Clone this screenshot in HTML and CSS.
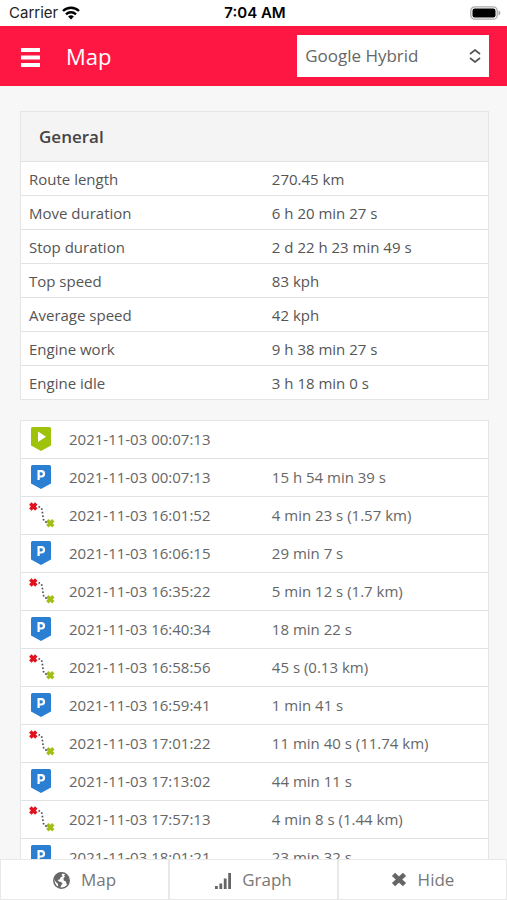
FILE: index.html
```html
<!DOCTYPE html>
<html lang="en">
<head>
<meta charset="utf-8">
<meta name="viewport" content="width=device-width, initial-scale=1">
<title>Map</title>
<link rel="stylesheet" href="styles.css">
</head>
<body>
<svg width="0" height="0" class="sprites" aria-hidden="true">
  <symbol id="start" viewBox="0 0 20 24">
    <path fill="#9fc20b" d="M1.500 0h17q1.500 0 1.500 1.500V18.500L10 24 0 18.500V1.500Q0 0 1.500 0z"/>
    <path fill="#fff" d="M7 4.500v10.500l8-5.250z"/>
  </symbol>
  <symbol id="park" viewBox="0 0 20 24">
    <path fill="#2b7fd3" d="M1.500 0h17q1.500 0 1.500 1.500V18.500L10 24 0 18.500V1.500Q0 0 1.500 0z"/>
    <path fill="none" stroke="#fff" stroke-width="2.200" d="M7.600 15V6.100h2.700a2.700 2.700 0 0 1 0 5.400H7.600"/>
  </symbol>
  <symbol id="drive" viewBox="0 0 26 26">
    <path stroke="#e3111b" stroke-width="3.400" d="M1.300 1.500l6 6M7.300 1.500l-6 6"/>
    <path stroke="#a1bf17" stroke-width="3.400" d="M18.300 18.300l6 6M24.300 18.300l-6 6"/>
    <path fill="none" stroke="#555" stroke-width="1.700" stroke-dasharray="1.700 1.900" d="M9.500 4.500l3 1.500 1 5 .5 4.500 1 3.500 3 1.500"/>
  </symbol>
</svg>
<div class="app">
  <div class="status">
    <span class="carrier">Carrier
      <svg width="18" height="14" viewBox="0 0 18 14" aria-hidden="true"><g fill="none" stroke="#000" stroke-width="2.400"><path d="M1 5a11.500 11.500 0 0 1 16 0"/><path d="M4 8.300a7.300 7.300 0 0 1 10 0"/></g><path d="M9 13.500L6.100 10.600a4.200 4.200 0 0 1 5.800 0z"/></svg>
    </span>
    <span class="time">7:04 AM</span>
    <svg class="battery" width="31" height="14" viewBox="0 0 31 14" aria-hidden="true"><rect x=".8" y=".8" width="26.400" height="12.400" rx="4" fill="#fff" stroke="#aaa" stroke-width="1.300"/><rect x="2.500" y="2.500" width="23" height="9" rx="2.200"/><path fill="#aaa" d="M28.500 4.500q2 .7 2 2.500t-2 2.500z"/></svg>
  </div>
  <header class="topbar">
    <button class="menu" type="button" aria-label="Menu"><svg width="20" height="20" viewBox="0 0 20 20"><path fill="#fff" d="M0 1h19v4H0zM0 8.500h19v4H0zM0 16h19v4H0z"/></svg></button>
    <h1>Map</h1>
    <div class="picker">
      <select aria-label="Map type"><option>Google Hybrid</option></select>
      <svg width="12" height="14" viewBox="0 0 12 14" aria-hidden="true"><path fill="none" stroke="#555" stroke-width="1.700" d="M1 5l5-4 5 4M1 9l5 4 5-4"/></svg>
    </div>
  </header>
  <main>
    <section class="card">
      <h2>General</h2>
      <table class="facts">
        <tr><th scope="row">Route length</th><td>270.45 km</td></tr>
        <tr><th scope="row">Move duration</th><td>6 h 20 min 27 s</td></tr>
        <tr><th scope="row">Stop duration</th><td>2 d 22 h 23 min 49 s</td></tr>
        <tr><th scope="row">Top speed</th><td>83 kph</td></tr>
        <tr><th scope="row">Average speed</th><td>42 kph</td></tr>
        <tr><th scope="row">Engine work</th><td>9 h 38 min 27 s</td></tr>
        <tr><th scope="row">Engine idle</th><td>3 h 18 min 0 s</td></tr>
      </table>
    </section>
    <section class="card">
      <table class="events">
        <tr><th scope="row"><span><svg class="pin"><use href="#start"/></svg>2021-11-03 00:07:13</span></th><td></td></tr>
        <tr><th scope="row"><span><svg class="pin"><use href="#park"/></svg>2021-11-03 00:07:13</span></th><td>15 h 54 min 39 s</td></tr>
        <tr><th scope="row"><span><svg class="leg"><use href="#drive"/></svg>2021-11-03 16:01:52</span></th><td>4 min 23 s (1.57 km)</td></tr>
        <tr><th scope="row"><span><svg class="pin"><use href="#park"/></svg>2021-11-03 16:06:15</span></th><td>29 min 7 s</td></tr>
        <tr><th scope="row"><span><svg class="leg"><use href="#drive"/></svg>2021-11-03 16:35:22</span></th><td>5 min 12 s (1.7 km)</td></tr>
        <tr><th scope="row"><span><svg class="pin"><use href="#park"/></svg>2021-11-03 16:40:34</span></th><td>18 min 22 s</td></tr>
        <tr><th scope="row"><span><svg class="leg"><use href="#drive"/></svg>2021-11-03 16:58:56</span></th><td>45 s (0.13 km)</td></tr>
        <tr><th scope="row"><span><svg class="pin"><use href="#park"/></svg>2021-11-03 16:59:41</span></th><td>1 min 41 s</td></tr>
        <tr><th scope="row"><span><svg class="leg"><use href="#drive"/></svg>2021-11-03 17:01:22</span></th><td>11 min 40 s (11.74 km)</td></tr>
        <tr><th scope="row"><span><svg class="pin"><use href="#park"/></svg>2021-11-03 17:13:02</span></th><td>44 min 11 s</td></tr>
        <tr><th scope="row"><span><svg class="leg"><use href="#drive"/></svg>2021-11-03 17:57:13</span></th><td>4 min 8 s (1.44 km)</td></tr>
        <tr><th scope="row"><span><svg class="pin"><use href="#park"/></svg>2021-11-03 18:01:21</span></th><td>23 min 32 s</td></tr>
      </table>
    </section>
  </main>
  <nav class="tabs">
    <button type="button"><svg width="17" height="17" viewBox="0 0 17 17" aria-hidden="true"><circle cx="8.500" cy="8.500" r="7.700" fill="#fff" stroke="#666" stroke-width="1.500"/><path fill="#666" d="M1 7L3 3l4-2.200 2.500.4-1 1.800 1.300 1-2.300 1.500-1 2-2 .5 1.500 1.500 2.500.7 1 1.600-1.500 1.800-.8 2.400-2-1L5 12 2.500 9.500zM11 3.200l2-.8 2.500 3 .7 4-1.200 3-1.500-.4-.5-2.500-2.300-1L10.500 6l1.500-1.200z"/></svg>Map</button>
    <button type="button"><svg width="16" height="17" viewBox="0 0 16 17" aria-hidden="true"><path fill="#666" d="M0 14h2.800v3H0zM4.400 11.500h2.800V17H4.400zM8.800 6.500h2.800V17H8.800zM13.200 1H16v16h-2.800z"/></svg>Graph</button>
    <button type="button"><svg width="16" height="16" viewBox="0 0 16 16" aria-hidden="true"><path stroke="#666" stroke-width="4.600" stroke-linejoin="round" d="M2.500 2.300l11 10.400M13.500 2.300l-11 10.400"/></svg>Hide</button>
  </nav>
</div>
</body>
</html>
```
FILE: styles.css
```css
* {
  box-sizing: border-box;
}

body {
  margin: 0;
  background: #f7f7f7;
  color: #555;
  font: 15px/20px "Open Sans", sans-serif;
}

button,
select {
  font: inherit;
  color: inherit;
}

svg {
  flex: none;
}

.sprites {
  position: absolute;
}

.app {
  display: flex;
  flex-direction: column;
  height: 100vh;
}

.status {
  display: grid;
  grid-template-columns: 1fr auto 1fr;
  align-items: center;
  flex: none;
  height: 26px;
  padding: 0 6px 0 9px;
  background: #fff;
  color: #222;
  font: 15px/20px Inter, sans-serif;
}

.carrier {
  display: flex;
  align-items: center;
  gap: 4px;
}

.time {
  color: #000;
  font-weight: 600;
}

.battery {
  justify-self: end;
}

.topbar {
  display: flex;
  align-items: center;
  flex: none;
  height: 60px;
  padding: 0 18px 0 21px;
  background: #ff1744;
}

.menu {
  display: flex;
  padding: 2px 0 0;
  border: 0;
  background: none;
}

h1 {
  flex: 1;
  margin: 0 0 0 25px;
  color: #fff;
  font-size: 22px;
  font-weight: 400;
  line-height: 30px;
}

.picker {
  display: grid;
  align-items: center;
  width: 41%;
  min-width: 160px;
}

.picker > * {
  grid-area: 1 / 1;
}

.picker select {
  width: 100%;
  height: 42px;
  padding: 0 8px;
  border: 0;
  border-radius: 0;
  appearance: none;
  background: #fff;
  color: #666;
  font-size: 17px;
}

.picker svg {
  justify-self: end;
  margin-right: 8px;
  pointer-events: none;
}

main {
  flex: 1;
  min-height: 0;
  padding: 25px 18px 0 20px;
  overflow-y: auto;
  scrollbar-width: none;
}

.card {
  margin-bottom: 20px;
  border: 1px solid #e5e5e5;
  background: #fff;
}

h2 {
  margin: 0;
  padding: 14px 18px 13px;
  background: #f4f4f4;
  color: #444;
  font-size: 17px;
  font-weight: 600;
  line-height: 22px;
}

table {
  width: 100%;
  border-collapse: separate;
  border-spacing: 0;
  table-layout: fixed;
}

th,
td {
  height: 34px;
  padding: 0 8px;
  border-top: 1px solid #e2e2e2;
  font-weight: 400;
  text-align: left;
}

th {
  width: 52%;
}

.events th,
.events td {
  height: 38px;
  padding-bottom: 1px;
  color: #666;
}

.events tr:first-child > * {
  height: 37px;
  border-top: 0;
}

.events span {
  display: flex;
  align-items: center;
}

.pin {
  width: 20px;
  height: 24px;
  margin: 0 18px 0 2px;
}

.leg {
  width: 26px;
  height: 26px;
  margin-right: 14px;
}

.tabs {
  display: flex;
  flex: none;
  gap: 2px;
  padding: 1px;
  background: #e8e8e8;
}

.tabs button {
  display: flex;
  align-items: center;
  justify-content: center;
  gap: 11px;
  flex: 1 1 0;
  height: 39px;
  padding: 1px 0 0;
  border: 0;
  background: #fff;
  color: #777;
  font-size: 17px;
}
```
